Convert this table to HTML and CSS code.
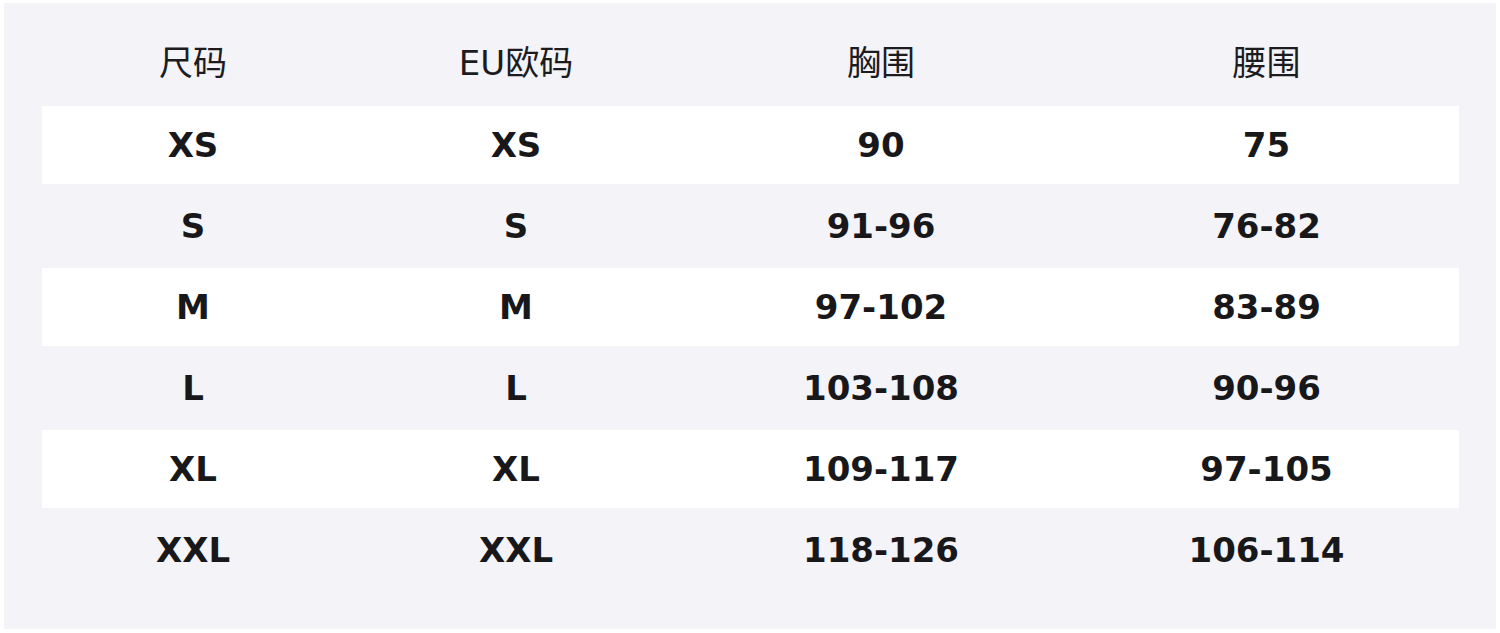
FILE: index.html
```html
<!DOCTYPE html>
<html lang="zh">
<head>
<meta charset="utf-8">
<title>尺码表</title>
<link rel="stylesheet" href="styles.css">
</head>
<body>
<div class="panel">
  <div class="row head">
    <div class="cell">尺码</div>
    <div class="cell">EU欧码</div>
    <div class="cell">胸围</div>
    <div class="cell">腰围</div>
  </div>
  <div class="row odd">
    <div class="cell">XS</div><div class="cell">XS</div><div class="cell">90</div><div class="cell">75</div>
  </div>
  <div class="row">
    <div class="cell">S</div><div class="cell">S</div><div class="cell">91-96</div><div class="cell">76-82</div>
  </div>
  <div class="row odd">
    <div class="cell">M</div><div class="cell">M</div><div class="cell">97-102</div><div class="cell">83-89</div>
  </div>
  <div class="row">
    <div class="cell">L</div><div class="cell">L</div><div class="cell">103-108</div><div class="cell">90-96</div>
  </div>
  <div class="row odd">
    <div class="cell">XL</div><div class="cell">XL</div><div class="cell">109-117</div><div class="cell">97-105</div>
  </div>
  <div class="row">
    <div class="cell">XXL</div><div class="cell">XXL</div><div class="cell">118-126</div><div class="cell">106-114</div>
  </div>
</div>
</body>
</html>
```

FILE: styles.css
```css
html, body {
  margin: 0;
  padding: 0;
  background: #ffffff;
}

body {
  padding: 3px 4px 4px 4px;
  font-family: "DejaVu Sans", "Noto Sans CJK SC", sans-serif;
  color: #18181b;
}

.panel {
  background: #f3f3f8;
  padding: 20px 37px 40px 38px;
  display: flex;
  flex-direction: column;
  gap: 3px;
}

.row {
  display: grid;
  grid-template-columns: 302px 344px 386px 1fr;
  height: 78px;
  align-items: center;
}

.row.head {
  height: 80px;
}

.row.odd {
  background: #ffffff;
}

.cell {
  text-align: center;
  font-size: 34px;
  font-weight: 700;
  line-height: 1;
}

.head .cell {
  font-weight: 400;
  font-size: 34px;
  color: #1c1c1f;
}
```
